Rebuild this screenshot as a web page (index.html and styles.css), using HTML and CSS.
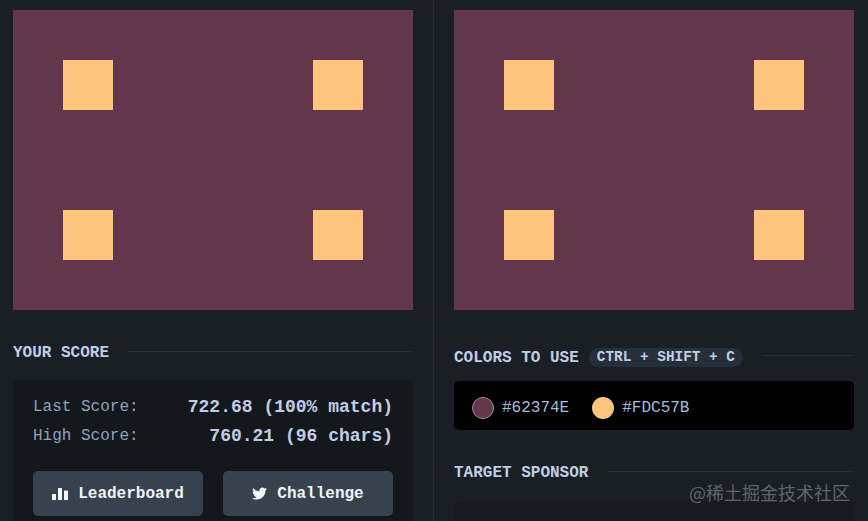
FILE: index.html
```html
<!DOCTYPE html>
<html lang="en">
<head>
<meta charset="utf-8">
<title>CSS Battle</title>
<link rel="stylesheet" href="styles.css">
</head>
<body>
<main class="layout">
  <section class="col col-left">
    <div class="target"><span class="dot"></span><span class="dot"></span><span class="dot"></span><span class="dot"></span></div>
    <div class="heading heading-score"><h2>YOUR SCORE</h2><span class="rule"></span></div>
    <div class="card">
      <div class="row"><span class="label">Last Score:</span><span class="value">722.68 (100% match)</span></div>
      <div class="row"><span class="label">High Score:</span><span class="value">760.21 (96 chars)</span></div>
      <div class="actions">
        <a class="btn">
          <svg class="icon" viewBox="0 0 16 12" aria-hidden="true"><rect x="0" y="6" width="4" height="6" rx=".6"/><rect x="6" y="0" width="4" height="12" rx=".6"/><rect x="12" y="2.5" width="4" height="9.5" rx=".6"/></svg>
          Leaderboard
        </a>
        <a class="btn">
          <svg class="icon icon-tw" viewBox="0 0 512 512" aria-hidden="true"><path d="M459.37 151.716c.325 4.548.325 9.097.325 13.645 0 138.72-105.583 298.558-298.558 298.558-59.452 0-114.68-17.219-161.137-47.106 8.447.974 16.568 1.299 25.34 1.299 49.055 0 94.213-16.568 130.274-44.832-46.132-.975-84.792-31.188-98.112-72.772 6.498.974 12.995 1.624 19.818 1.624 9.421 0 18.843-1.3 27.614-3.573-48.081-9.747-84.143-51.98-84.143-102.985v-1.299c13.969 7.797 30.214 12.67 47.431 13.319-28.264-18.843-46.781-51.005-46.781-87.391 0-19.492 5.197-37.36 14.294-52.954 51.655 63.675 129.3 105.258 216.365 109.807-1.624-7.797-2.599-15.918-2.599-24.04 0-57.828 46.782-104.934 104.934-104.934 30.213 0 57.502 12.67 76.67 33.137 23.715-4.548 46.456-13.32 66.599-25.34-7.798 24.366-24.366 44.833-46.132 57.827 21.117-2.273 41.584-8.122 60.426-16.243-14.292 20.791-32.161 39.308-52.628 54.253z"/></svg>
          Challenge
        </a>
      </div>
    </div>
  </section>
  <section class="col col-right">
    <div class="target"><span class="dot"></span><span class="dot"></span><span class="dot"></span><span class="dot"></span></div>
    <div class="heading heading-colors"><h2>COLORS TO USE</h2><span class="chip">CTRL + SHIFT + C</span><span class="rule"></span></div>
    <div class="swatches">
      <span class="swatch"><i class="circle circle-plum"></i>#62374E</span>
      <span class="swatch"><i class="circle circle-amber"></i>#FDC57B</span>
    </div>
    <div class="heading heading-sponsor"><h2>TARGET SPONSOR</h2><span class="rule"></span></div>
    <div class="sponsor"></div>
  </section>
</main>
<div class="watermark">@稀土掘金技术社区</div>
</body>
</html>
```
FILE: styles.css
```css
* { box-sizing: border-box; }
html, body { height: 100%; }
body {
  margin: 0;
  background: #191f25;
  color: #c0cee5;
  font-family: "Liberation Mono", "DejaVu Sans Mono", monospace;
  font-size: 16px;
  overflow: hidden;
}
.layout { display: flex; height: 521px; overflow: hidden; }
.col { padding-top: 10px; }
.col-left { width: 434px; padding-left: 13px; padding-right: 20px; border-right: 1px solid #252c32; }
.col-right { padding-left: 20px; width: 420px; }
.target {
  width: 400px;
  height: 300px;
  background: #62374e;
  display: grid;
  grid-template-columns: 50px 50px;
  grid-template-rows: 50px 50px;
  justify-content: space-between;
  align-content: space-between;
  padding: 50px;
}
.dot { background: #fdc57b; }
.heading { display: flex; align-items: center; height: 20px; }
.heading h2 { margin: 2px 0 0; font-size: 16px; font-weight: 700; color: #c0cee5; white-space: nowrap; line-height: 20px; }
.rule { flex: 1; height: 1px; background: #262d33; }
.heading-score { margin-top: 32px; }
.heading-score .rule { margin-left: 19px; margin-top: -2px; }
.heading-colors { margin-top: 37px; }
.heading-colors .rule { margin-left: 20px; margin-top: -3px; }
.heading-sponsor { margin-top: 32px; }
.heading-sponsor .rule { margin-left: 20px; margin-top: -1px; }
.chip {
  margin-left: 10px;
  padding: 0 8px;
  height: 19px;
  line-height: 19px;
  border-radius: 10px;
  background: #26303a;
  font-size: 14.4px;
  font-weight: 700;
  white-space: nowrap;
}
.card {
  margin-top: 18px;
  width: 400px;
  height: 160px;
  padding: 13px 20px 0;
  background: #14181d;
  border-radius: 6px;
}
.row { display: flex; justify-content: space-between; align-items: flex-start; height: 29px; }
.label { color: #93a2bb; line-height: 29px; }
.value { font-weight: 700; font-size: 18px; line-height: 29px; }
.actions { display: flex; gap: 20px; margin-top: 20px; }
.btn {
  flex: 1;
  height: 45px;
  display: flex;
  align-items: center;
  justify-content: center;
  gap: 10px;
  border-radius: 5px;
  background: #36434f;
  color: #f2f5f8;
  font-weight: 700;
}
.icon { width: 16px; height: 12px; fill: #f2f5f8; flex: none; }
.icon-tw { width: 15px; height: 15px; }
.swatches {
  margin-top: 14px;
  width: 400px;
  height: 49px;
  padding: 4px 0 0 18px;
  display: flex;
  align-items: center;
  gap: 23px;
  background: #000;
  border-radius: 5px;
}
.swatch { display: flex; align-items: center; gap: 8px; color: #a8bcd6; }
.circle { width: 22px; height: 22px; border-radius: 50%; flex: none; }
.circle-plum { background: #62374e; border: 1px solid #a08a98; }
.circle-amber { background: #fdc57b; }
.sponsor { margin-top: 19px; width: 400px; height: 100px; background: #171b20; border-radius: 6px; }
.watermark {
  position: absolute;
  left: 689px;
  top: 481px;
  font-family: "Noto Sans CJK SC", sans-serif;
  font-size: 18px;
  line-height: 22px;
  color: #5f666d;
  white-space: nowrap;
}
```
